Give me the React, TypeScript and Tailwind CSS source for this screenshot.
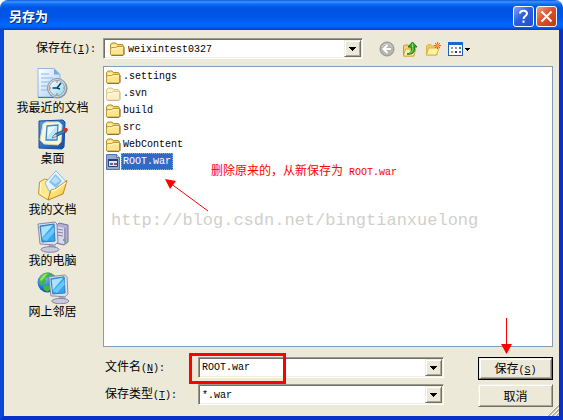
import React, { useState } from 'react';

const PLACES = [
  { label: '我最近的文档', icon: <RecentIcon /> },
  { label: '桌面', icon: <DesktopIcon /> },
  { label: '我的文档', icon: <DocumentsIcon /> },
  { label: '我的电脑', icon: <ComputerIcon /> },
  { label: '网上邻居', icon: <NetworkIcon /> },
];

const FILES = [
  { name: '.settings', kind: 'folder' },
  { name: '.svn', kind: 'hidden' },
  { name: 'build', kind: 'folder' },
  { name: 'src', kind: 'folder' },
  { name: 'WebContent', kind: 'folder' },
  { name: 'ROOT.war', kind: 'file' },
];

const MONO = "font-['Liberation_Mono','Noto_Sans_CJK_SC',monospace] text-[10px]";
const SUNKEN =
  'border border-t-[#9d9a8c] border-l-[#9d9a8c] border-r-white border-b-white bg-white shadow-[inset_1px_1px_0_#716f64,inset_-1px_-1px_0_#f1efe2]';
const RAISED =
  'border border-t-[#f1efe2] border-l-[#f1efe2] border-r-[#716f64] border-b-[#716f64] bg-[#ece9d8] shadow-[inset_1px_1px_0_#ffffff,inset_-1px_-1px_0_#aca899]';

/* Icons */

function Folder() {
  return (
    <svg width="16" height="16" viewBox="0 0 16 16" className="shrink-0">
      <path d="M1.5 13V3.5L3 2h4l1.5 1.5h5L14.5 5v8l-1 1h-11z" fill="#f2cf60" stroke="#b8912d" />
      <path d="M2.5 3.5h4.5l1 1.5h5.5v2h-11z" fill="#fff0a8" />
      <path d="M1.5 13.5V8l1.2-1.5h4L8 5.5h6l.8 1V13l-1 1H2z" fill="#fce58a" stroke="#c39a33" />
      <path d="M3 8h4.3l1.2-1.2H14" fill="none" stroke="#fffbd3" />
      <path d="M2.5 14.5h11.5l1-1V6" fill="none" stroke="#8d7440" />
    </svg>
  );
}

function WarFile() {
  return (
    <svg width="16" height="16" viewBox="0 0 16 16" className="shrink-0">
      <path d="M1.5.5h10l3 3v12h-13z" fill="#8eabd4" stroke="#5474ab" />
      <path d="M11.5.5v3h3" fill="#d7e3f4" stroke="#5474ab" />
      <path d="M3.5 5.5h9v7h-9z" fill="#dce7f6" stroke="#27416f" />
      <path d="M3 5h10v2H3z" fill="#273e78" />
      <path d="M5 9h2v2H5zm4 0h2v2H9z" fill="#4766ab" />
      <path d="M7 9h1v2H7zm4 0h1v2h-1z" fill="#b04958" />
    </svg>
  );
}

function RecentIcon() {
  return (
    <svg width="32" height="32" viewBox="0 0 32 32">
      <defs>
        <linearGradient id="recentPage" x2="1" y2="1">
          <stop stopColor="#ffffff" />
          <stop offset="1" stopColor="#a9cdf7" />
        </linearGradient>
        <linearGradient id="recentClock" x2="1" y2="1">
          <stop stopColor="#f8fdff" />
          <stop offset="1" stopColor="#8fd8f5" />
        </linearGradient>
      </defs>
      <path d="M1 .5h16l6 6V29H1z" fill="url(#recentPage)" stroke="#96b6e2" />
      <path d="M17 .5l6 6h-6z" fill="#7fa7df" />
      <path d="M1 29.5h22" stroke="#4271b4" />
      <path d="M4 6h8M4 10h12M4 14h8M4 18h6M4 22h6" stroke="#8db6eb" />
      <circle cx="20.5" cy="20.5" r="10" fill="#8c8e91" />
      <circle cx="20" cy="20" r="9.5" fill="#d8d9dc" stroke="#8f969d" />
      <circle cx="20" cy="20" r="7.6" fill="url(#recentClock)" stroke="#8ba8b8" />
      <path d="M15.5 20H20l4-5M20 20l3 1" fill="none" stroke="#13415b" strokeWidth="1.6" />
      <path d="M20 13v2M20 25v2M13 20h1M26 20h1" stroke="#d06942" />
    </svg>
  );
}

function DesktopIcon() {
  return (
    <svg width="32" height="32" viewBox="0 0 32 32">
      <defs>
        <linearGradient id="deskBlue" x2="1" y2="1">
          <stop stopColor="#579cea" />
          <stop offset="1" stopColor="#0f4ba5" />
        </linearGradient>
      </defs>
      <path d="M2 2l24-1 2 2-1 25-2 2-23-1z" fill="url(#deskBlue)" stroke="#164d9b" />
      <path d="M6 5l3-2 13 0 3 3-1 17-3 3-14-1-4-4z" fill="#fbf7d5" stroke="#d4d7bb" />
      <path d="M10 7l11-1-1 15-11 0z" fill="#bce7ff" stroke="#348ad4" strokeWidth="1.3" />
      <path d="M11 8l8-1-9 11z" fill="#edfaff" />
      <path d="M15 19l3-4 9-4 2 2-9 4z" fill="#3e8bd1" stroke="#205681" />
      <path d="M15 19l3-4 2 2z" fill="#f3d59a" />
      <path d="M27 9l3 0 1 2-2 3-3-2z" fill="#c93430" />
    </svg>
  );
}

function DocumentsIcon() {
  return (
    <svg width="32" height="32" viewBox="0 0 32 32">
      <defs>
        <linearGradient id="docsFolder" x2="1" y2="1">
          <stop stopColor="#fff7b4" />
          <stop offset=".6" stopColor="#fbdc6d" />
          <stop offset="1" stopColor="#e8a92c" />
        </linearGradient>
      </defs>
      <path d="M2.5 12l5-3 4 1 2 3-1 17-3-1-8-5z" fill="#ffe98b" stroke="#c2922f" />
      <path d="M8 13L19 .8 29 11.5 20 23l-8-2z" fill="#e5f4ff" stroke="#8eb8dc" />
      <path d="M18.5 4l6.5 7-6 7-7-6z" fill="#85c1ee" />
      <path d="M18.5 6l4.5 5-5 3-4-3z" fill="#b8defa" />
      <path d="M11 30l3-10 4-1 12-8.5L26 24z" fill="url(#docsFolder)" stroke="#bd8727" />
      <path d="M14.5 21l4-1L29 12.5" fill="none" stroke="#fffcc9" strokeWidth="1.3" />
      <path d="M3.5 13v10l6 4" fill="none" stroke="#fff9cf" />
    </svg>
  );
}

function Monitor() {
  return (
    <g>
      <path d="M12 23l-1 5 7 1 1-4z" fill="#a4a6c2" />
      <ellipse cx="13" cy="28.5" rx="9" ry="2.8" fill="#c9c9dc" stroke="#8182a0" />
      <path d="M1 3l17-2 2 2 1 18-3 3-15-1z" fill="#dedeea" stroke="#8889a8" />
      <path d="M3 5l14-2 1 17-13 1z" fill="#32a7ee" stroke="#357bb8" />
      <path d="M4 6l12-2-11 13z" fill="#a9e2ff" />
      <path d="M5 18l12-12 .5 5-8 9z" fill="#68c7ff" />
    </g>
  );
}

function ComputerIcon() {
  return (
    <svg width="32" height="32" viewBox="0 0 32 32">
      <path d="M19 5l3-3 9 2v17l-4 3-8-2z" fill="#b2afd0" stroke="#77759f" />
      <path d="M19 5l8 2v16l-8-2z" fill="#dad8e9" />
      <path d="M20 8l6 1M20 11l6 1M20 14l6 1" stroke="#8583a8" />
      <path d="M28 7v15" stroke="#817ea9" />
      <path d="M26 18h3v2h-3z" fill="#44c94b" />
      <Monitor />
    </svg>
  );
}

function NetworkIcon() {
  return (
    <svg width="32" height="32" viewBox="0 0 32 32">
      <defs>
        <radialGradient id="globe" cx=".35" cy=".3" r=".8">
          <stop stopColor="#79c3ff" />
          <stop offset=".6" stopColor="#1f72d4" />
          <stop offset="1" stopColor="#0c3a8d" />
        </radialGradient>
      </defs>
      <circle cx="10.5" cy="10.5" r="10" fill="url(#globe)" />
      <path d="M2 7l5-6 6-.5-1 4-4 2 1 3-4 4-3-2zM12 3l4-1 3 5-4 3-3-2zM6 14l5-1 3 3-3 4-4-2z" fill="#43b836" />
      <path d="M3 7l4-5 4-.5-4 5-3 3z" fill="#92df61" />
      <g transform="translate(11 2) scale(.95)">
        <Monitor />
      </g>
    </svg>
  );
}

function BackIcon() {
  return (
    <svg width="16" height="16" viewBox="0 0 16 16">
      <circle cx="8" cy="8" r="7" fill="#b5b4ae" stroke="#94938c" />
      <path d="M3 6a5.5 5.5 0 0110 0" fill="none" stroke="#d2d1cb" />
      <path d="M12 8H5M8.5 4L4.5 8l4 4" fill="none" stroke="#ffffff" strokeWidth="2" />
    </svg>
  );
}

function UpIcon() {
  return (
    <svg width="16" height="16" viewBox="0 0 16 16">
      <path d="M1.5 15V5l1-1h4l1 1H12v10z" fill="#f2d572" stroke="#c39c35" />
      <path d="M1.5 15l2-7H14l-2.5 7z" fill="#fff0a6" stroke="#d1ae4a" />
      <path d="M5 13c4-1 5-3 4-7H6l4.5-5L15 6h-2.5c1 5-2 8-7.5 7z" fill="#30b329" stroke="#16761d" />
      <path d="M10.5 2.5v4c1 3-1 5-3 6" fill="none" stroke="#8ce26e" />
    </svg>
  );
}

function NewFolderIcon() {
  return (
    <svg width="16" height="16" viewBox="0 0 16 16">
      <path d="M1.5 14V5L3 3.5h3L7.5 5H12v9z" fill="#ebca63" stroke="#dcb550" />
      <path d="M1.5 14l2-7H14l-2.5 7z" fill="#fff1a2" stroke="#d9b24a" />
      <path d="M12.5 1v7M9 4.5h7M10 2l5 5M15 2l-5 5" stroke="#e5562b" />
      <circle cx="12.5" cy="4.5" r="1.5" fill="#ffc03d" stroke="#ef7a32" />
    </svg>
  );
}

function ViewsIcon() {
  return (
    <svg width="22" height="16" viewBox="0 0 22 16" shapeRendering="crispEdges">
      <path d="M.5 1.5h14v13H.5z" fill="#ffffff" stroke="#1764bd" />
      <path d="M0 1h15v3H0z" fill="#176bc8" />
      <path d="M3 6h2v2H3zm4 0h2v2H7z" fill="#9b9a9f" />
      <path d="M11 6h2v2h-2z" fill="#2b9b32" />
      <path d="M3 10h2v2H3z" fill="#ea774b" />
      <path d="M7 10h2v2H7z" fill="#153d89" />
      <path d="M11 10h2v2h-2z" fill="#a34c85" />
      <path d="M17 7h5v1h-1v1h-1v1h-1V9h-1V8h-1z" fill="#000000" />
    </svg>
  );
}

function DownArrow() {
  return (
    <svg width="7" height="4" viewBox="0 0 7 4" shapeRendering="crispEdges">
      <path d="M0 0h7v1H6v1H5v1H4v1H3V3H2V2H1V1H0z" fill="#000000" />
    </svg>
  );
}

/* Controls */

interface DropDownProps {
  id: string;
  value: string;
  icon?: React.ReactNode;
}

const DropDown: React.FC<DropDownProps> = ({ id, value, icon }) => (
  <div className={`relative h-[21px] ${SUNKEN}`}>
    {icon && <span className="absolute left-[5px] top-[2px] pointer-events-none">{icon}</span>}
    <select
      id={id}
      defaultValue={value}
      className={`block h-full w-full appearance-none bg-transparent outline-none pt-px leading-[17px] ${icon ? 'pl-6' : 'pl-[3px]'} ${MONO}`}
    >
      <option>{value}</option>
    </select>
    <span className={`absolute right-px top-px bottom-px w-[17px] flex items-center justify-center pointer-events-none ${RAISED}`}>
      <DownArrow />
    </span>
  </div>
);

const Key = ({ letter, colon }: { letter: string; colon?: boolean }) => (
  <span className={MONO}>
    (<u>{letter}</u>){colon && ':'}
  </span>
);

export default function App() {
  const [fileName, setFileName] = useState('ROOT.war');

  return (
    <div className="min-h-screen flex flex-col text-black text-xs font-['Noto_Sans_CJK_SC',sans-serif] rounded-t-lg overflow-hidden bg-[#ece9d8]">
      <header className="h-[30px] shrink-0 flex items-center justify-between pl-[9px] pr-[6px] pt-[2px] bg-[linear-gradient(#0a55d9_0%,#3c93ff_6%,#0a6cf5_14%,#0054e3_26%,#0055e8_55%,#0066ff_82%,#005cf5_92%,#003dc0_100%)]">
        <h1 className="text-[13px] leading-5 font-bold text-white [text-shadow:1px_1px_0_#0a2a80]">另存为</h1>
        <div className="flex gap-[2px]">
          <button aria-label="帮助" className="size-[21px] rounded-[3px] border border-white bg-[linear-gradient(135deg,#7fa5f5,#2c60e0_45%,#2050cc)] flex items-center justify-center">
            <svg width="13" height="15" viewBox="0 0 13 15" fill="none" stroke="#ffffff" strokeWidth="2">
              <path d="M3 4.5C3 .7 10 .7 10 4.5 10 7 6.5 7 6.5 10M6.5 11.5v2.2" />
            </svg>
          </button>
          <button aria-label="关闭" className="size-[21px] rounded-[3px] border border-white bg-[linear-gradient(135deg,#f0a088,#e0512c_45%,#c8350f)] flex items-center justify-center">
            <svg width="13" height="13" viewBox="0 0 13 13" fill="none" stroke="#ffffff" strokeWidth="2">
              <path d="M1.5 1.5l10 10M11.5 1.5l-10 10" />
            </svg>
          </button>
        </div>
      </header>

      <main className="flex-1 flex flex-col border-4 border-t-0 border-l-[#0848d8] border-r-[#0831c9] border-b-[#0831c9] pt-2 pr-[6px] pb-[9px]">
        <div className="flex items-center">
          <label htmlFor="folder" className="w-[99px] pl-8 leading-4">
            保存在<Key letter="I" colon />
          </label>
          <div className="flex-1">
            <DropDown id="folder" value="weixintest0327" icon={<Folder />} />
          </div>
          <div className="flex gap-[7px] pl-4 w-[190px]">
            <button aria-label="后退"><BackIcon /></button>
            <button aria-label="向上一级"><UpIcon /></button>
            <button aria-label="新建文件夹"><NewFolderIcon /></button>
            <button aria-label="查看"><ViewsIcon /></button>
          </div>
        </div>

        <div className="flex-1 flex mt-[7px]">
          <nav className="w-[99px] flex flex-col gap-[5px] pt-[2px] pr-[2px]">
            {PLACES.map(p => (
              <button key={p.label} className="flex flex-col items-center leading-[14px]">
                {p.icon}
                {p.label}
              </button>
            ))}
          </nav>

          <div className="relative flex-1 border border-[#7f9db9] bg-white pt-px pl-px">
            <ul className={`leading-[17px] ${MONO}`}>
              {FILES.map(f => (
                <li key={f.name} className="flex items-center h-[17px]">
                  <span className={f.kind === 'hidden' ? 'opacity-50' : ''}>
                    {f.kind === 'file' ? <WarFile /> : <Folder />}
                  </span>
                  <span
                    className={
                      f.kind === 'file'
                        ? 'h-[17px] leading-[15px] px-px border border-dotted border-[#e0a040] bg-[#316ac5] text-white'
                        : 'pl-[2px] leading-[17px]'
                    }
                  >
                    {f.name}
                  </span>
                </li>
              ))}
            </ul>

            {/* Notes drawn over the list */}
            <p className="absolute left-[107px] top-[95px] leading-4 whitespace-nowrap text-[#ff0000]">
              删除原来的，从新保存为<span className={MONO}> ROOT.war</span>
            </p>
            <svg className="absolute left-[61px] top-[112px]" width="44" height="33" viewBox="0 0 44 33">
              <path d="M5 4l38 28" stroke="#ff0000" />
              <path d="M0 0l11 2-6 8z" fill="#ff0000" />
            </svg>
            <p className="absolute left-[7px] top-[140px] leading-7 text-[17px] whitespace-nowrap text-[#d0d0ca] font-['Liberation_Mono',monospace]">
              http://blog.csdn.net/bingtianxuelong
            </p>
          </div>
        </div>

        <div className="flex mt-[10px] pl-[101px]">
          <div className="flex-1 flex flex-col gap-[6px]">
            <div className="flex items-center">
              <label htmlFor="filename" className="w-[93px] leading-4">
                文件名<Key letter="N" colon />
              </label>
              <div className={`relative flex-1 h-[21px] flex p-px ${SUNKEN}`}>
                <input
                  id="filename"
                  value={fileName}
                  onChange={e => setFileName(e.target.value)}
                  className={`flex-1 min-w-0 pl-[2px] pt-px bg-transparent outline-none ${MONO}`}
                />
                <button aria-label="文件名列表" className={`w-[17px] flex items-center justify-center ${RAISED}`}>
                  <DownArrow />
                </button>
                <span className="absolute -left-[10px] -top-[5px] w-[97px] h-[31px] border-[3px] border-[#ff0000] pointer-events-none" />
              </div>
            </div>
            <div className="flex items-center">
              <label htmlFor="filetype" className="w-[93px] leading-4">
                保存类型<Key letter="T" colon />
              </label>
              <div className="flex-1">
                <DropDown id="filetype" value="*.war" />
              </div>
            </div>
          </div>

          <div className="w-[75px] ml-[34px] flex flex-col gap-1">
            <div className="relative border border-black">
              <button className={`block w-full h-[21px] leading-[17px] ${RAISED}`}>
                保存<Key letter="S" />
              </button>
              <svg className="absolute left-[22px] bottom-full mb-1" width="11" height="36" viewBox="0 0 11 36">
                <path d="M5.5 0v28" stroke="#ff0000" />
                <path d="M0 26h11L5.5 36z" fill="#ff0000" />
              </svg>
            </div>
            <button className={`h-[23px] leading-[19px] ${RAISED}`}>取消</button>
          </div>
        </div>
      </main>

      <svg className="fixed right-1 bottom-1" width="12" height="12" viewBox="0 0 12 12">
        <path d="M1 12L12 1M5 12l7-7M9 12l3-3" stroke="#aca899" strokeWidth="2" />
        <path d="M0 12L12 0M4 12l8-8M8 12l4-4" stroke="#ffffff" />
      </svg>
    </div>
  );
}
